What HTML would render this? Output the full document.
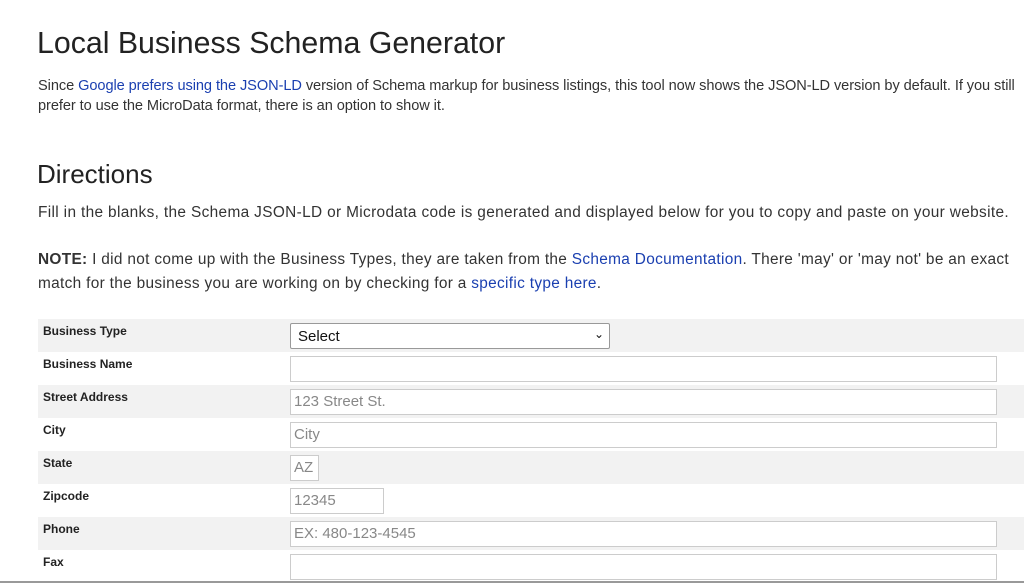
<!DOCTYPE html>
<html><head><meta charset="utf-8"><style>
body{margin:0;width:1024px;height:583px;overflow:hidden;background:#fff;font-family:"Liberation Sans",sans-serif;color:#333;position:relative}
.a{position:absolute;white-space:nowrap}
h1,h2{margin:0;font-weight:normal;color:#222}
.p{font-size:14.6px;letter-spacing:-0.08px;color:#333}
a{color:#1a3fb0;text-decoration:none}
.row{position:absolute;left:38px;width:986px;height:33px}
.g{background:#f2f2f2}
.lab{position:absolute;left:5px;top:5px;font-size:12px;font-weight:bold;color:#222}
.in{position:absolute;left:252px;top:4px;height:24px;border:1px solid #ccc;background:#fff;box-sizing:border-box;font-size:15px;color:#888;padding:3px 0 0 3px}
</style></head><body>
<h1 class="a" style="left:37px;top:27px;font-size:30.3px">Local Business Schema Generator</h1>
<div class="a p" style="left:38px;top:78px">Since <a>Google prefers using the JSON-LD</a> version of Schema markup for business listings, this tool now shows the JSON-LD version by default. If you still</div>
<div class="a p" style="left:38px;top:98px">prefer to use the MicroData format, there is an option to show it.</div>
<h2 class="a" style="left:37px;top:159px;font-size:26px">Directions</h2>
<div class="a p" style="left:38px;top:204px;font-size:15.4px;letter-spacing:0.35px">Fill in the blanks, the Schema JSON-LD or Microdata code is generated and displayed below for you to copy and paste on your website.</div>
<div class="a p" style="left:38px;top:251px;font-size:15.4px;letter-spacing:0.32px"><b>NOTE:</b> I did not come up with the Business Types, they are taken from the <a>Schema Documentation</a>. There 'may' or 'may not' be an exact</div>
<div class="a p" style="left:38px;top:275px;font-size:15.4px;letter-spacing:0.32px">match for the business you are working on by checking for a <a>specific type here</a>.</div>

<div class="row g" style="top:319px"><div class="lab">Business Type</div><div class="in" style="width:320px;height:26px;border:1px solid #999;border-radius:2px;color:#111;padding:4px 0 0 7px">Select<span style="position:absolute;right:5px;top:3px;font-size:12px">&#8964;</span></div></div>
<div class="row" style="top:352px"><div class="lab">Business Name</div><div class="in" style="width:707px;height:26px"></div></div>
<div class="row g" style="top:385px"><div class="lab">Street Address</div><div class="in" style="width:707px;height:26px">123 Street St.</div></div>
<div class="row" style="top:418px"><div class="lab">City</div><div class="in" style="width:707px;height:26px">City</div></div>
<div class="row g" style="top:451px"><div class="lab">State</div><div class="in" style="width:29px;height:26px">AZ</div></div>
<div class="row" style="top:484px"><div class="lab">Zipcode</div><div class="in" style="width:94px;height:26px">12345</div></div>
<div class="row g" style="top:517px"><div class="lab">Phone</div><div class="in" style="width:707px;height:26px">EX: 480-123-4545</div></div>
<div class="row" style="top:550px"><div class="lab">Fax</div><div class="in" style="width:707px;height:26px"></div></div>
<div class="a" style="left:0;top:581px;width:1024px;height:2px;background:#999"></div>
</body></html>
